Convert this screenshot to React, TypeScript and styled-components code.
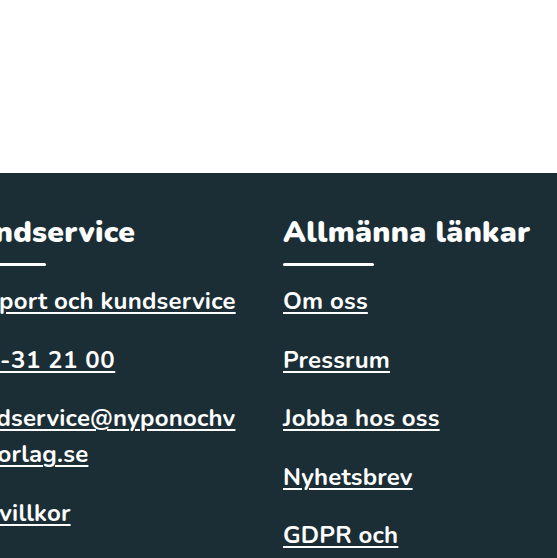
import React from "react";
import styled, { createGlobalStyle } from "styled-components";

const Global = createGlobalStyle`
  html, body { margin: 0; padding: 0; background: #ffffff; }
  body { font-family: "Nunito", "Open Sans", "Noto Sans", sans-serif; overflow: hidden; }
`;

const Page = styled.div`
  width: 557px;
  height: 558px;
  overflow: hidden;
  display: flex;
  flex-direction: column;
`;

const TopSpace = styled.div`
  height: 173px;
  flex: none;
  background: #ffffff;
`;

const Footer = styled.footer`
  flex: 1;
  background: #1b2e36;
  padding-top: 43px;
  color: #ffffff;
`;

const Columns = styled.div`
  display: grid;
  grid-template-columns: 287px 1fr;
  column-gap: 41px;
  margin-left: -45px;
`;

const Column = styled.section`
  display: flex;
  flex-direction: column;
  align-items: flex-start;
`;

const Heading = styled.h2`
  margin: 0;
  font-size: 30px;
  line-height: 34px;
  font-weight: 900;
  letter-spacing: 0.3px;
  white-space: nowrap;
`;

const Bar = styled.div`
  margin-top: 13px;
  width: 91px;
  height: 3px;
  border-radius: 2px;
  background: #ffffff;
`;

const LinkList = styled.ul`
  list-style: none;
  margin: 17px 0 0;
  padding: 0;
  display: flex;
  flex-direction: column;
  gap: 22.5px;
  width: 100%;
`;

const Item = styled.li`
  font-size: 24px;
  line-height: 36px;
  font-weight: 700;
  letter-spacing: 0.2px;
`;

const Link = styled.a`
  color: #ffffff;
  text-decoration: underline;
  text-decoration-thickness: 2px;
  text-underline-offset: 3px;
`;

const Phone = styled.span`
  letter-spacing: 0.6px;
`;

export default function App() {
  return (
    <Page>
      <Global />
      <TopSpace />
      <Footer>
        <Columns>
          <Column>
            <Heading>Kundservice</Heading>
            <Bar />
            <LinkList>
              <Item>
                <Link href="#">Support och kundservice</Link>
              </Item>
              <Item>
                <Link href="#">
                  <Phone>010-31 21 00</Phone>
                </Link>
              </Item>
              <Item>
                <Link href="#">
                  kundservice@nyponochv<wbr />iljaforlag.se
                </Link>
              </Item>
              <Item>
                <Link href="#">Köpvillkor</Link>
              </Item>
            </LinkList>
          </Column>
          <Column>
            <Heading>Allmänna länkar</Heading>
            <Bar />
            <LinkList>
              {["Om oss", "Pressrum", "Jobba hos oss", "Nyhetsbrev", "GDPR och"].map((t) => (
                <Item key={t}>
                  <Link href="#">{t}</Link>
                </Item>
              ))}
            </LinkList>
          </Column>
        </Columns>
      </Footer>
    </Page>
  );
}
